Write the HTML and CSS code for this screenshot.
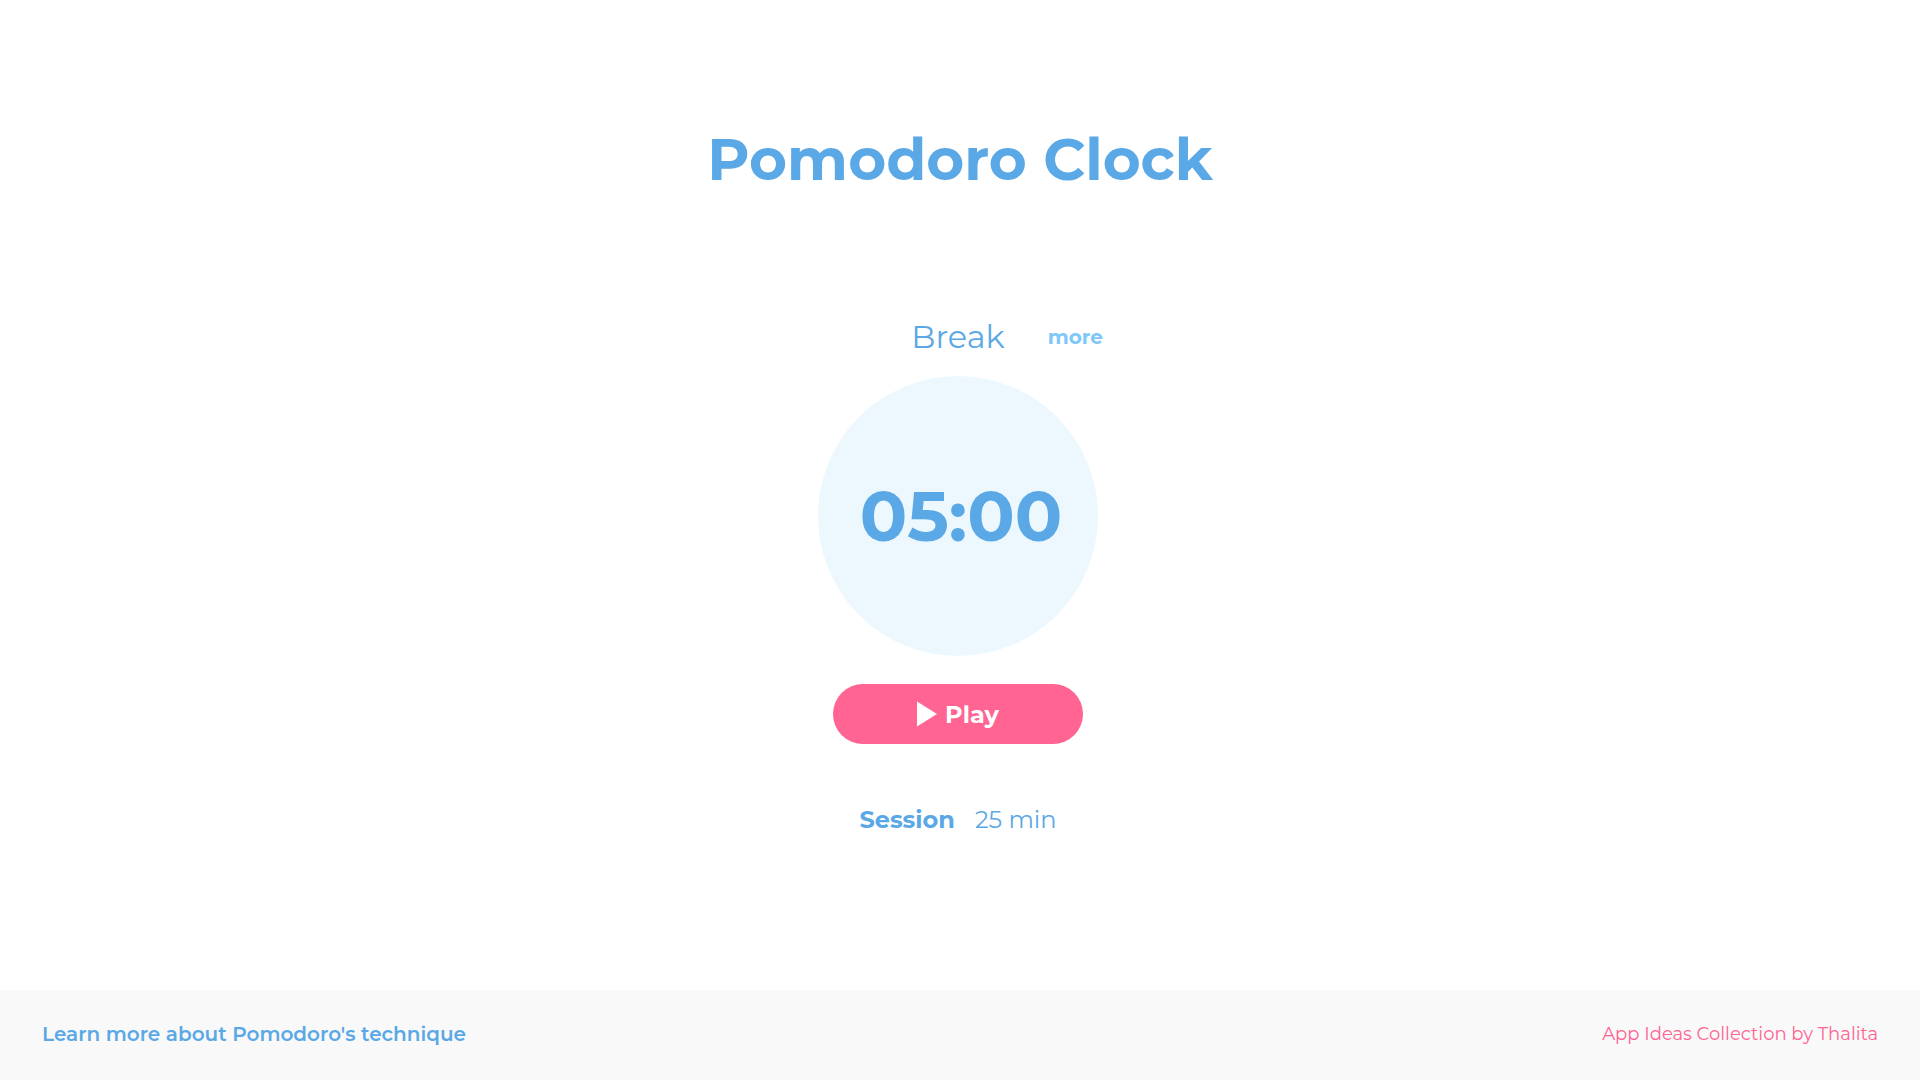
FILE: index.html
```html
<!DOCTYPE html>
<html lang="en">
<head>
<meta charset="utf-8">
<title>Pomodoro Clock</title>
<link rel="stylesheet" href="styles.css">
</head>
<body>
<main class="app">
  <h1 class="title">Pomodoro Clock</h1>
  <section class="timer">
    <header class="mode">
      <h2 class="mode-name">Break</h2>
      <button class="more" type="button">more</button>
    </header>
    <div class="clock">05:00</div>
    <button class="play" type="button">
      <svg class="play-icon" viewBox="0 0 20 26" aria-hidden="true"><path d="M0 0.5L20 13L0 25.5Z"/></svg>
      <span>Play</span>
    </button>
    <p class="session"><strong>Session</strong><span>25 min</span></p>
  </section>
</main>
<footer class="footer">
  <a class="learn" href="#">Learn more about Pomodoro's technique</a>
  <a class="credit" href="#">App Ideas Collection by Thalita</a>
</footer>
</body>
</html>
```

FILE: styles.css
```css
* { box-sizing: border-box; }
body {
  margin: 0;
  min-height: 100vh;
  display: flex;
  flex-direction: column;
  background: #fff;
  color: #5aa8e6;
  font-family: Montserrat, "Open Sans", sans-serif;
}
h1, h2, p { margin: 0; font-weight: 400; }
button { border: 0; background: none; padding: 0; font: inherit; color: inherit; cursor: pointer; }
a { text-decoration: none; }
.app {
  flex: 1;
  display: flex;
  flex-direction: column;
  align-items: center;
  padding-top: 124px;
}
.title { font-size: 58px; line-height: 72px; font-weight: 700; }
.timer {
  display: flex;
  flex-direction: column;
  align-items: center;
  margin-top: 122px;
  padding-right: 4px;
}
.mode {
  display: grid;
  grid-template-columns: 1fr auto 1fr;
  align-items: center;
  column-gap: 43px;
  line-height: 38px;
}
.mode-name { grid-column: 2; font-size: 32px; }
.more { color: #7ec8f8; font-size: 20px; font-weight: 700; }
.clock {
  display: grid;
  place-items: center;
  width: 280px;
  height: 280px;
  margin-top: 20px;
  padding-left: 6px;
  border-radius: 50%;
  background: #ecf8fe;
  font-size: 70px;
  font-weight: 700;
}
.play {
  display: flex;
  align-items: center;
  justify-content: center;
  gap: 8px;
  width: 250px;
  height: 60px;
  margin-top: 28px;
  border-radius: 30px;
  background: #ff6492;
  color: #fff;
  font-size: 24px;
  font-weight: 700;
}
.play-icon { width: 20px; height: 26px; fill: currentColor; }
.session { display: flex; gap: 20px; margin-top: 60px; font-size: 24px; line-height: 32px; }
.footer {
  display: flex;
  align-items: center;
  justify-content: space-between;
  height: 90px;
  padding: 0 42px 2px;
  background: #f9f9f9;
}
.learn { color: #5aa8e6; font-size: 20px; font-weight: 600; }
.credit { color: #ff6492; font-size: 18px; }
```
